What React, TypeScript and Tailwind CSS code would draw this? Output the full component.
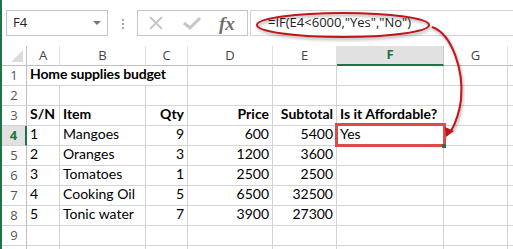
const cols = ["A", "B", "C", "D", "E", "F", "G", ""];

type Cell = { text: string; right?: boolean; bold?: boolean };

const rows: Cell[][] = [
  [],
  [],
  [
    { text: "S/N", bold: true },
    { text: "Item", bold: true },
    { text: "Qty", bold: true, right: true },
    { text: "Price", bold: true, right: true },
    { text: "Subtotal", bold: true, right: true },
    { text: "Is it Affordable?", bold: true },
  ],
  [
    { text: "1" },
    { text: "Mangoes" },
    { text: "9", right: true },
    { text: "600", right: true },
    { text: "5400", right: true },
    { text: "Yes" },
  ],
  [
    { text: "2" },
    { text: "Oranges" },
    { text: "3", right: true },
    { text: "1200", right: true },
    { text: "3600", right: true },
  ],
  [
    { text: "3" },
    { text: "Tomatoes" },
    { text: "1", right: true },
    { text: "2500", right: true },
    { text: "2500", right: true },
  ],
  [
    { text: "4" },
    { text: "Cooking Oil" },
    { text: "5", right: true },
    { text: "6500", right: true },
    { text: "32500", right: true },
  ],
  [
    { text: "5" },
    { text: "Tonic water" },
    { text: "7", right: true },
    { text: "3900", right: true },
    { text: "27300", right: true },
  ],
  [],
  [],
];

function FormulaBar() {
  return (
    <div className="flex h-[46px] items-start pt-[10px]">
      <div className="ml-[4px] flex h-[26px] w-[102px] shrink-0 items-center justify-between border border-[#c6c6c6] pl-[6px] pr-[6px]">
        <span className="font-['Open_Sans',sans-serif] text-[13px] text-[#222]">F4</span>
        <span className="h-0 w-0 border-x-[4px] border-t-[4px] border-x-transparent border-t-[#777]" />
      </div>
      <div className="ml-[14px] mt-[9px] flex shrink-0 flex-col gap-[2px]">
        <span className="h-[2px] w-[2px] bg-[#aaa]" />
        <span className="h-[2px] w-[2px] bg-[#aaa]" />
        <span className="h-[2px] w-[2px] bg-[#aaa]" />
      </div>
      <div className="ml-[13px] flex h-[26px] w-[111px] shrink-0 items-center border border-[#c6c6c6]">
        <svg width="16" height="16" viewBox="0 0 16 16" className="ml-[10px]">
          <path d="M2 2 L14 14 M14 2 L2 14" stroke="#c6c6c6" strokeWidth="2" fill="none" />
        </svg>
        <svg width="20" height="16" viewBox="0 0 20 16" className="ml-[18px]">
          <path d="M2 8 L8 13 L18 3" stroke="#c6c6c6" strokeWidth="3" fill="none" />
        </svg>
        <span className="ml-[17px] font-['Liberation_Serif',serif] text-[19px] font-bold italic leading-none text-[#6f6f6f]">fx</span>
      </div>
      <div className="ml-[2px] flex h-[26px] flex-1 items-center border-y border-l border-[#d4d4d4] pl-[17px]">
        <span className="whitespace-nowrap font-['Open_Sans',sans-serif] text-[13px] text-[#222]">=IF(E4&lt;6000,"Yes","No")</span>
      </div>
    </div>
  );
}

function Grid() {
  return (
    <div className="grid grid-cols-[25px_33px_86px_42px_85px_64px_107px_64px_1fr] auto-rows-[20px] font-[Lato,sans-serif] text-[14px] text-black">
      <div className="relative border-b border-r border-[#bfbfbf]">
        <span className="absolute bottom-[3px] right-[3px] h-0 w-0 border-b-[12px] border-l-[12px] border-b-[#dcdcdc] border-l-transparent" />
      </div>
      {cols.map((c) =>
        c === "F" ? (
          <div
            key={c}
            className="flex items-center justify-center border-b-2 border-r border-b-[#217346] border-r-[#c6c6c6] bg-[#e1e1e1] font-['Open_Sans',sans-serif] text-[13px] font-bold text-[#217346]"
          >
            {c}
          </div>
        ) : (
          <div
            key={c}
            className="flex items-center justify-center border-b border-r border-b-[#bfbfbf] border-r-[#e1e1e1] font-['Open_Sans',sans-serif] text-[13px] text-[#444]"
          >
            {c}
          </div>
        )
      )}
      {rows.map((r, i) => {
        const n = i + 1;
        const sel = n === 4;
        return [
          <div
            key={`h${n}`}
            className={
              sel
                ? "flex items-center justify-center border-b border-r-2 border-b-[#d4d4d4] border-r-[#217346] bg-[#e1e1e1] font-['Open_Sans',sans-serif] text-[13px] font-bold text-[#217346]"
                : "flex items-center justify-center border-b border-r border-b-[#d4d4d4] border-r-[#bfbfbf] font-['Open_Sans',sans-serif] text-[13px] text-[#555]"
            }
          >
            {n < 10 ? n : ""}
          </div>,
          ...(n === 1
            ? [
                <div
                  key="a1"
                  className="col-span-3 flex items-end whitespace-nowrap border-b border-r border-[#d4d4d4] pb-[1px] pl-[3px] font-bold tracking-[-0.15px]"
                >
                  Home supplies budget
                </div>,
                ...[0, 1, 2, 3, 4].map((k) => (
                  <div key={`e1${k}`} className="border-b border-r border-[#d4d4d4]" />
                )),
              ]
            : cols.map((_, j) => {
                const cell = r[j];
                return (
                  <div
                    key={`c${n}${j}`}
                    className={`flex items-end whitespace-nowrap border-b border-r border-[#d4d4d4] px-[3px] pb-[1px] ${
                      cell?.right ? "justify-end" : ""
                    } ${cell?.bold ? "font-bold" : ""}`}
                  >
                    {cell?.text}
                  </div>
                );
              })),
        ];
      })}
    </div>
  );
}

export default function App() {
  return (
    <div className="relative h-[249px] w-[513px] overflow-hidden border-l-2 border-[#217346] bg-white">
      <FormulaBar />
      <Grid />
      {/* selection annotation on F4 */}
      <div className="absolute left-[333px] top-[123px] h-[24px] w-[111px] border-[3px] border-[#e04a45]" />
      <div className="absolute left-[440px] top-[144px] h-[4px] w-[4px] bg-[#217346]" />
      <svg className="pointer-events-none absolute left-0 top-0" width="513" height="249">
        <defs>
          <filter id="sh" x="-10%" y="-50%" width="120%" height="200%">
            <feDropShadow dx="1" dy="2" stdDeviation="1.5" floodColor="#000" floodOpacity="0.35" />
          </filter>
        </defs>
        <ellipse cx="341" cy="25" rx="86" ry="12" fill="none" stroke="#c0141b" strokeWidth="2" filter="url(#sh)" />
        <path d="M430 27 C450 34, 462 70, 459 100 C457 115, 453 124, 449 131" fill="none" stroke="#c0141b" strokeWidth="2" filter="url(#sh)" />
        <path d="M444 137 L443 127 L452 131 Z" fill="#c0141b" />
      </svg>
    </div>
  );
}
